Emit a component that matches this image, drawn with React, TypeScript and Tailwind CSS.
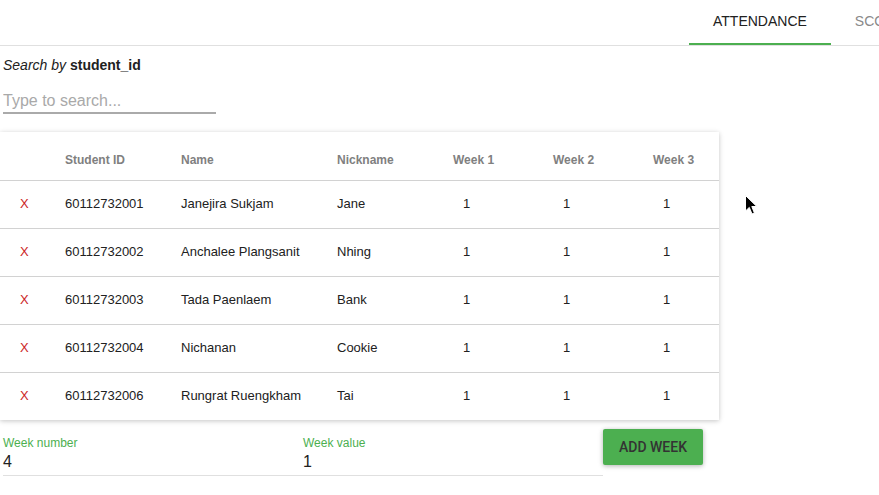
import React from "react";

const students = [
  { id: "60112732001", name: "Janejira Sukjam", nickname: "Jane" },
  { id: "60112732002", name: "Anchalee Plangsanit", nickname: "Nhing" },
  { id: "60112732003", name: "Tada Paenlaem", nickname: "Bank" },
  { id: "60112732004", name: "Nichanan", nickname: "Cookie" },
  { id: "60112732006", name: "Rungrat Ruengkham", nickname: "Tai" },
];

const weeks = ["Week 1", "Week 2", "Week 3"];

const cols = "grid grid-cols-[45px_116px_156px_116px_100px_100px_86px]";

const App = () => {
  return (
    <div className="relative w-[879px] h-[495px] overflow-hidden bg-white font-['Liberation_Sans',Arial,sans-serif] text-[#212121]">
      {/* tabs */}
      <div className="flex h-[46px] pl-[689px] border-b border-[#e0e0e0] whitespace-nowrap overflow-hidden">
        <div className="relative flex items-center h-full px-6 pb-[2px] text-[14px] uppercase text-[#212121]">
          Attendance
          <div className="absolute left-0 right-0 bottom-0 h-[2px] bg-[#4caf50]" />
        </div>
        <div className="relative flex items-center h-full px-6 pb-[2px] text-[14px] uppercase text-[#8a8a8a]">
          Score
        </div>
      </div>

      {/* search */}
      <div className="pl-[3px] mt-[11px] text-[14px] leading-[16px]">
        <span className="italic">Search by </span>
        <span className="font-bold">student_id</span>
      </div>
      <input
        readOnly
        placeholder="Type to search..."
        className="block ml-[3px] mt-[17px] w-[213px] h-[24px] border-b-2 border-[#aaaaaa] text-[16px] outline-none placeholder-[#a9a9a9] bg-transparent"
      />

      {/* table card */}
      <div className="mt-[18px] w-[719px] bg-white shadow-[0_1px_6px_rgba(0,0,0,0.12),0_1px_4px_rgba(0,0,0,0.12)]">
        <div className={`${cols} h-[48px] pt-[7px] items-center text-[12px] font-bold text-[#808080]`}>
          <div />
          <div className="pl-[20px]">Student ID</div>
          <div className="pl-[20px]">Name</div>
          <div className="pl-[20px]">Nickname</div>
          {weeks.map((w) => (
            <div key={w} className="pl-[20px]">
              {w}
            </div>
          ))}
        </div>
        {students.map((s) => (
          <div
            key={s.id}
            className={`${cols} h-[48px] pb-[1px] items-center border-t border-[#d2d2d2] text-[13px]`}
          >
            <div className="pl-[20px] text-[#cc1f1f]">X</div>
            <div className="pl-[20px]">{s.id}</div>
            <div className="pl-[20px]">{s.name}</div>
            <div className="pl-[20px]">{s.nickname}</div>
            {weeks.map((w) => (
              <div key={w} className="pl-[30px]">
                1
              </div>
            ))}
          </div>
        ))}
      </div>

      {/* add week */}
      <div className="flex items-start">
        <div className="flex ml-[3px] w-[600px] pt-[16px] pb-[3px] border-b border-[#e0e0e0]">
          <div className="w-[300px]">
            <div className="text-[12px] leading-[14px] text-[#4caf50]">Week number</div>
            <div className="mt-[2px] text-[16px] leading-[20px]">4</div>
          </div>
          <div className="w-[300px]">
            <div className="text-[12px] leading-[14px] text-[#4caf50]">Week value</div>
            <div className="mt-[2px] text-[16px] leading-[20px]">1</div>
          </div>
        </div>
        <button className="mt-[9px] w-[100px] h-[36px] rounded-[2px] bg-[#4caf50] font-['Roboto',sans-serif] text-[14px] font-medium uppercase text-[#333333] shadow-[0_1px_6px_rgba(0,0,0,0.12),0_1px_4px_rgba(0,0,0,0.2)]">
          Add week
        </button>
      </div>

      {/* mouse pointer */}
      <svg
        className="absolute left-[745px] top-[195px]"
        width="13"
        height="21"
        viewBox="0 0 13 21"
      >
        <path
          d="M0.5 0.5 L0.5 16 L4.3 12.4 L7 19 L9.4 18 L6.8 11.5 L11.8 11.5 Z"
          fill="#000"
          stroke="#fff"
          strokeWidth="1"
        />
      </svg>
    </div>
  );
};

export default App;
